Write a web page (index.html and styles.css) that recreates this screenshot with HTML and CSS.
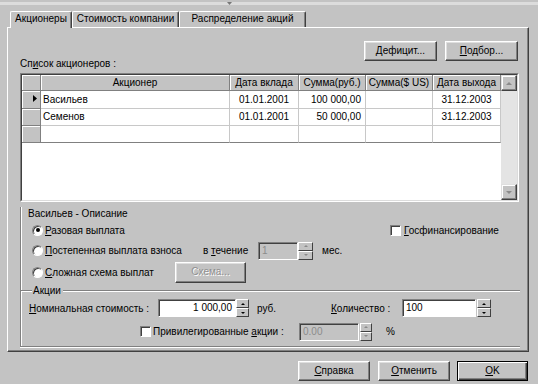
FILE: index.html
```html
<!DOCTYPE html>
<html lang="ru">
<head>
<meta charset="utf-8">
<title>Акционеры</title>
<link rel="stylesheet" href="styles.css">
</head>
<body>
<div class="topbar"><svg class="tick" width="5" height="4" viewBox="0 0 5 4"><path d="M0 0 L5 0 L2.5 3 Z" fill="#777"/></svg></div>
<div class="tabs">
  <div class="tab t1 active">Акционеры</div>
  <div class="tab t2">Стоимость компании</div>
  <div class="tab t3">Распределение акций</div>
</div>
<div class="panel">
  <div class="btnrow">
    <button class="btn w73"><u>Д</u>ефицит...</button>
    <button class="btn w73"><u>П</u>одбор...</button>
  </div>
  <div class="caption">Сп<u>и</u>сок акционеров :</div>
  <div class="grid">
    <div class="grid-in">
      <div class="grid-body">
        <table class="tbl">
          <colgroup>
            <col class="c-ind"><col class="c-name"><col class="c-dv"><col class="c-sr"><col class="c-su"><col class="c-dx">
          </colgroup>
          <thead>
            <tr class="h"><th class="ind"></th><th>Акционер</th><th>Дата вклада</th><th>Сумма(руб.)</th><th>Сумма($ US)</th><th>Дата выхода</th></tr>
          </thead>
          <tbody>
            <tr class="r-a"><td class="ind"><svg width="4" height="7" viewBox="0 0 4 7"><path d="M0 0 L4 3.5 L0 7 Z" fill="#000"/></svg></td><td class="l">Васильев</td><td class="c">01.01.2001</td><td class="r">100 000,00</td><td></td><td class="c">31.12.2003</td></tr>
            <tr class="r-b"><td class="ind"></td><td class="l">Семенов</td><td class="c">01.01.2001</td><td class="r">50 000,00</td><td></td><td class="c">31.12.2003</td></tr>
            <tr class="r-b last"><td class="ind"></td><td></td><td></td><td></td><td></td><td></td></tr>
          </tbody>
        </table>
      </div>
      <div class="vscroll">
        <div class="sbtn"><span class="tri up"></span></div>
        <div class="track"></div>
        <div class="sbtn"><span class="tri down"></span></div>
      </div>
    </div>
  </div>

  <div class="group">
    <div class="g-title">Васильев - Описание</div>
    <div class="row r1">
      <div class="rad w358"><span class="radio on"></span><span><u>Р</u>азовая выплата</span></div>
      <div class="chk-l"><span class="check"></span><span><u>Г</u>осфинансирование</span></div>
    </div>
    <div class="row r2">
      <div class="rad w171"><span class="radio"></span><span><u>П</u>остепенная выплата взноса</span></div>
      <span class="lbl w55">в <u>т</u>ечение</span>
      <div class="field dis w40">1</div>
      <div class="spin w15 dis"><span class="sp"><span class="tri up"></span></span><span class="sp"><span class="tri down"></span></span></div>
      <span class="unit-mes">мес.</span>
    </div>
    <div class="row r3">
      <div class="rad w143"><span class="radio"></span><span><u>С</u>ложная схема выплат</span></div>
      <button class="btn dis-btn w71 h21">Схема...</button>
    </div>
    <div class="divider"><span class="ln short"></span><span class="dl">Акции</span><span class="ln grow"></span></div>
    <div class="row r4">
      <span class="lbl w129"><u>Н</u>оминальная стоимость :</span>
      <div class="field w78 right">1 000,00</div>
      <div class="spin w13"><span class="sp"><span class="tri up"></span></span><span class="sp"><span class="tri down"></span></span></div>
      <span class="lbl w74 ml8">руб.</span>
      <span class="lbl w71"><u>К</u>оличество :</span>
      <div class="field w74">100</div>
      <div class="spin w14 ml1"><span class="sp"><span class="tri up"></span></span><span class="sp"><span class="tri down"></span></span></div>
    </div>
    <div class="row r5">
      <span class="check"></span>
      <span class="lbl w146 ml2">Привилегированные <u>а</u>кции :</span>
      <div class="field dis w60">0.00</div>
      <div class="spin w12 ml1 dis"><span class="sp"><span class="tri up"></span></span><span class="sp"><span class="tri down"></span></span></div>
      <span class="lbl ml14">%</span>
    </div>
  </div>
</div>
<div class="footer">
  <button class="btn w72"><u>С</u>правка</button>
  <button class="btn w72"><u>О</u>тменить</button>
  <button class="btn def w71"><u>О</u>K</button>
</div>
</body>
</html>
```
FILE: styles.css
```css
* { box-sizing: border-box; }
html, body { margin: 0; padding: 0; }
body {
  width: 538px;
  height: 384px;
  overflow: hidden;
  background: #c3c3c3;
  font-family: "Liberation Sans", Arial, sans-serif;
  font-size: 10px;
  color: #000;
}
u { text-decoration: underline; text-underline-offset: 1px; }

.topbar {
  height: 3px;
  background: #dcdcdc;
  padding-left: 227px;
}
.tick { display: block; margin-top: 2px; }

.tabs {
  display: flex;
  align-items: flex-end;
  height: 16px;
  margin-top: 6px;
  padding-left: 10px;
  position: relative;
  z-index: 2;
}
.tab {
  height: 16px;
  line-height: 14px;
  text-align: center;
  border-top: 1px solid #fff;
  border-left: 1px solid #fff;
  border-right: 1px solid #404040;
  box-shadow: inset -1px 0 0 #808080;
  border-radius: 2px 2px 0 0;
  background: #c3c3c3;
  white-space: nowrap;
}
.tab.active { height: 17px; margin-bottom: -1px; }
.t1 { width: 62px; }
.t2 { width: 107px; }
.t3 { width: 127px; }

.panel {
  margin-left: 7px;
  width: 522px;
  height: 325px;
  border-top: 1px solid #fff;
  border-left: 1px solid #fff;
  border-right: 1px solid #404040;
  border-bottom: 1px solid #404040;
  box-shadow: inset -1px -1px 0 #808080;
  padding-left: 12px;
  padding-right: 8px;
}

.btnrow {
  display: flex;
  justify-content: flex-end;
  gap: 8px;
  margin-top: 13px;
  height: 20px;
  padding-right: 2px;
}

.btn {
  height: 20px;
  padding: 0;
  margin: 0;
  font-family: inherit;
  font-size: 10px;
  color: #000;
  background: #c3c3c3;
  border: 1px solid;
  border-color: #fff #404040 #404040 #fff;
  box-shadow: inset -1px -1px 0 #808080, inset 1px 1px 0 #dfdfdf;
  text-align: center;
  line-height: 16px;
}
.btn.def {
  border-color: #000;
  box-shadow: inset 1px 1px 0 #fff, inset -1px -1px 0 #404040, inset -2px -2px 0 #808080;
}
.dis-btn { color: #909090; text-shadow: 1px 1px 0 #fff; }
.w73 { width: 73px; }
.w72 { width: 72px; }
.w71 { width: 71px; }
.h21 { height: 21px; }

.caption {
  margin-top: -3px;
  height: 12px;
  line-height: 12px;
}

.grid {
  margin-top: 3px;
  width: 499px;
  height: 129px;
  border: 1px solid;
  border-color: #808080 #fff #fff #808080;
}
.grid-in {
  display: flex;
  height: 100%;
  border: 1px solid;
  border-color: #404040 #dcdcdc #dcdcdc #404040;
  background: #fff;
}
.grid-body { width: 479px; overflow: hidden; }
.tbl {
  table-layout: fixed;
  width: 479px;
  border-collapse: separate;
  border-spacing: 0;
}
.c-ind { width: 19px; }
.c-name { width: 189px; }
.c-dv { width: 69px; }
.c-sr { width: 67px; }
.c-su { width: 67px; }
.c-dx { width: 68px; }

.tbl th, .tbl td {
  padding: 0 2px;
  white-space: nowrap;
  overflow: hidden;
  font-weight: normal;
  border-right: 1px solid #c8c8c8;
  border-bottom: 1px solid #c8c8c8;
}
.tbl th {
  height: 16px;
  background: #c3c3c3;
  border-right-color: #808080;
  border-bottom-color: #808080;
  box-shadow: inset 1px 1px 0 #fff;
  text-align: center;
  line-height: 14px;
}
.tbl td { line-height: 16px; }
.r-a td { height: 18px; }
.r-b td { height: 17px; }
.tbl td.ind {
  background: #c3c3c3;
  border-right-color: #808080;
  border-bottom-color: #808080;
  box-shadow: inset 1px 1px 0 #fff;
  text-align: right;
  padding: 0 3px 0 0;
}
.tbl td.ind svg { display: inline-block; vertical-align: middle; margin-top: -2px; }
.tbl tr.last td { border-bottom-color: #808080; }
.tbl td.l { text-align: left; padding-left: 2px; }
.tbl td.c { text-align: center; }
.tbl td.r { text-align: right; padding-right: 4px; }

.vscroll {
  width: 16px;
  display: flex;
  flex-direction: column;
}
.track {
  flex: 1;
  background: #e4e4e4;
}
.sbtn {
  height: 16px;
  background: #c3c3c3;
  border: 1px solid;
  border-color: #dfdfdf #404040 #404040 #dfdfdf;
  box-shadow: inset -1px -1px 0 #808080, inset 1px 1px 0 #fff;
  display: flex;
  align-items: center;
  justify-content: center;
}
.tri { width: 0; height: 0; border-left: 3px solid transparent; border-right: 3px solid transparent; }
.tri.up { border-bottom: 3px solid #8a8a8a; }
.tri.down { border-top: 3px solid #8a8a8a; }

.group {
  width: 500px;
  height: 140px;
  margin-top: 5px;
  border-left: 1px solid #808080;
  border-bottom: 1px solid #808080;
  box-shadow: inset 1px 0 0 #fff, 0 1px 0 #fff;
}
.g-title {
  height: 13px;
  line-height: 13px;
  padding-left: 7px;
}
.row {
  display: flex;
  align-items: center;
  padding-left: 11px;
  white-space: nowrap;
}
.r1 { height: 20px; }
.r2 { height: 21px; }
.r3 { height: 22px; }
.r4 { height: 18px; padding-left: 8px; }
.r5 { height: 19px; margin-top: 5px; padding-left: 119px; }

.rad, .chk-l { display: flex; align-items: center; gap: 2px; }
.w358 { width: 358px; }
.w171 { width: 171px; }
.w143 { width: 143px; }
.chk-l { gap: 3px; }

.radio {
  width: 11px;
  height: 11px;
  border-radius: 50%;
  background: #fff;
  border: 1px solid;
  border-color: #808080 #fff #fff #808080;
  box-shadow: inset 1px 1px 0 #404040;
  display: flex;
  align-items: center;
  justify-content: center;
  flex: none;
}
.radio.on::after {
  content: "";
  width: 4px;
  height: 4px;
  border-radius: 50%;
  background: #000;
}
.check {
  width: 11px;
  height: 11px;
  background: #fff;
  border: 1px solid;
  border-color: #808080 #fff #fff #808080;
  box-shadow: inset 1px 1px 0 #404040;
  flex: none;
}

.lbl { display: block; }
.w55 { width: 55px; }
.w129 { width: 129px; }
.w74 { width: 74px; }
.w146 { width: 146px; }
.ml8 { margin-left: 8px; }
.ml2 { margin-left: 2px; }
.ml1 { margin-left: 1px; }
.ml14 { margin-left: 14px; }
.unit-mes { margin-left: 9px; }

.field {
  height: 18px;
  line-height: 16px;
  padding: 0 3px;
  background: #fff;
  border: 1px solid;
  border-color: #808080 #fff #fff #808080;
  box-shadow: inset 1px 1px 0 #404040;
  flex: none;
}
.field.right { text-align: right; }
.field.dis { background: #c3c3c3; color: #8c8c8c; }
.w40 { width: 40px; }
.w78 { width: 78px; }
.w60 { width: 60px; }

.spin {
  height: 18px;
  display: flex;
  flex-direction: column;
  flex: none;
}
.w15 { width: 15px; }
.w13 { width: 13px; }
.w14 { width: 14px; }
.w12 { width: 12px; }
.sp {
  flex: 1;
  background: #c3c3c3;
  border: 1px solid;
  border-color: #fff #404040 #404040 #fff;
  display: flex;
  align-items: center;
  justify-content: center;
}
.spin .tri { border-left-width: 2px; border-right-width: 2px; }
.spin .tri.up { border-bottom: 2px solid #000; }
.spin .tri.down { border-top: 2px solid #000; }
.spin.dis .tri.up { border-bottom-color: #8a8a8a; }
.spin.dis .tri.down { border-top-color: #8a8a8a; }

.divider {
  height: 16px;
  display: flex;
  align-items: center;
}
.ln {
  height: 2px;
  border-top: 1px solid #808080;
  border-bottom: 1px solid #fff;
}
.ln.short { width: 11px; }
.ln.grow { flex: 1; }
.dl { padding: 0 2px 0 1px; line-height: 12px; }

.footer {
  display: flex;
  justify-content: flex-end;
  gap: 8px;
  margin-top: 9px;
  padding-right: 10px;
}
.footer .def { margin-left: -1px; }
```
